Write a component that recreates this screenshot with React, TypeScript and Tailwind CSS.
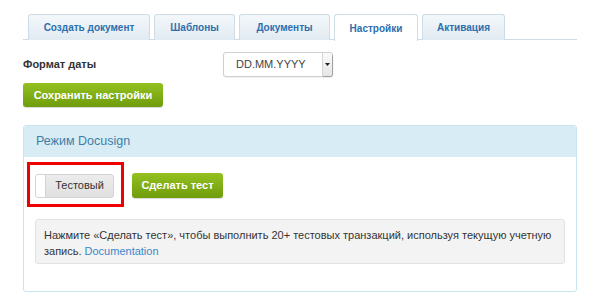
import React from "react";

const tabs = [
  { label: "Создать документ", w: "w-[122px]" },
  { label: "Шаблоны", w: "w-[81px]" },
  { label: "Документы", w: "w-[91px]" },
  { label: "Настройки", w: "w-[84px]", active: true },
  { label: "Активация", w: "w-[83px]" },
];

export default function App() {
  return (
    <div
      className="w-[600px] h-[306px] bg-white overflow-hidden"
      style={{ fontFamily: '"Liberation Sans", Arial, sans-serif' }}
    >
      <div className="ml-[23px] w-[554px] pt-[14px]">
        {/* Tabs */}
        <div className="flex gap-[4px] pl-[5px] border-b border-[#cddde7] h-[26px]">
          {tabs.map((t) => (
            <div
              key={t.label}
              className={`${t.w} h-[26px] flex items-center justify-center rounded-t-[3px] border border-b-0 border-[#cddde7] text-[10px] font-bold text-[#2c6fae] ${
                t.active
                  ? "bg-white h-[27px] -mb-px"
                  : "bg-gradient-to-b from-[#f3f7fa] to-[#e2ebf2]"
              }`}
            >
              {t.label}
            </div>
          ))}
        </div>

        {/* Date format row */}
        <div className="flex items-center mt-[12px]">
          <div className="w-[200px] text-[11px] font-bold text-[#333]">Формат даты</div>
          <div className="w-[110px] h-[25px] flex border border-[#cfcfcf] rounded-[3px] bg-white shadow-[0_1px_1px_rgba(0,0,0,0.06)]">
            <div className="flex-1 flex items-center pl-[12px] text-[11px] text-[#444]">DD.MM.YYYY</div>
            <div className="w-[10px] flex items-center justify-center border-l border-[#d6d6d6] bg-gradient-to-b from-[#fafafa] to-[#e6e6e6] rounded-r-[3px] shadow-[1px_1px_1px_rgba(0,0,0,0.25)]">
              <svg width="5" height="3" viewBox="0 0 5 3">
                <path d="M0 0 L5 0 L2.5 3 Z" fill="#222" />
              </svg>
            </div>
          </div>
        </div>

        {/* Save button */}
        <button className="mt-[6px] w-[140px] h-[24px] rounded-[3px] bg-gradient-to-b from-[#94c11f] to-[#6f9c0b] text-white text-[11px] font-bold shadow-[0_1px_1px_rgba(0,0,0,0.15)] flex items-center justify-center">
          Сохранить настройки
        </button>

        {/* Panel */}
        <div className="mt-[18px] h-[167px] border border-[#c8e4f0] rounded-[3px] overflow-hidden">
          <div className="h-[31px] bg-[#d8ecf6] flex items-center pl-[12px] text-[12.5px] text-[#3f7ea7]">
            Режим Docusign
          </div>
          <div className="relative px-[11px] pt-[16px]">
            <div className="flex items-center gap-[18px]">
              <div className="w-[79px] h-[24px] flex rounded-[3px] border border-[#d4d4d4] bg-gradient-to-b from-[#ececec] to-[#e0e0e0] overflow-hidden">
                <div className="w-[10px] bg-white border-r border-[#d4d4d4]" />
                <div className="flex-1 flex items-center justify-center text-[11px] text-[#333]">Тестовый</div>
              </div>
              <button className="w-[91px] h-[25px] rounded-[3px] bg-gradient-to-b from-[#94c11f] to-[#6f9c0b] text-white text-[11px] font-bold shadow-[0_1px_1px_rgba(0,0,0,0.15)] flex items-center justify-center">
                Сделать тест
              </button>
            </div>
            <div className="absolute left-[3px] top-[5px] w-[97px] h-[45px] border-[3px] border-[#ee0000] pointer-events-none" />

            <div className="mt-[21px] h-[45px] bg-[#f3f3f3] border border-[#e2e2e2] rounded-[3px] pl-[8px] pt-[7px] text-[11px] leading-[16px] text-[#333] flex flex-col">
              <div>Нажмите «Сделать тест», чтобы выполнить 20+ тестовых транзакций, используя текущую учетную</div>
              <div className="flex gap-[3px]">
                <span>запись.</span>
                <a className="text-[#3a86c8]">Documentation</a>
              </div>
            </div>
          </div>
        </div>
      </div>
    </div>
  );
}
